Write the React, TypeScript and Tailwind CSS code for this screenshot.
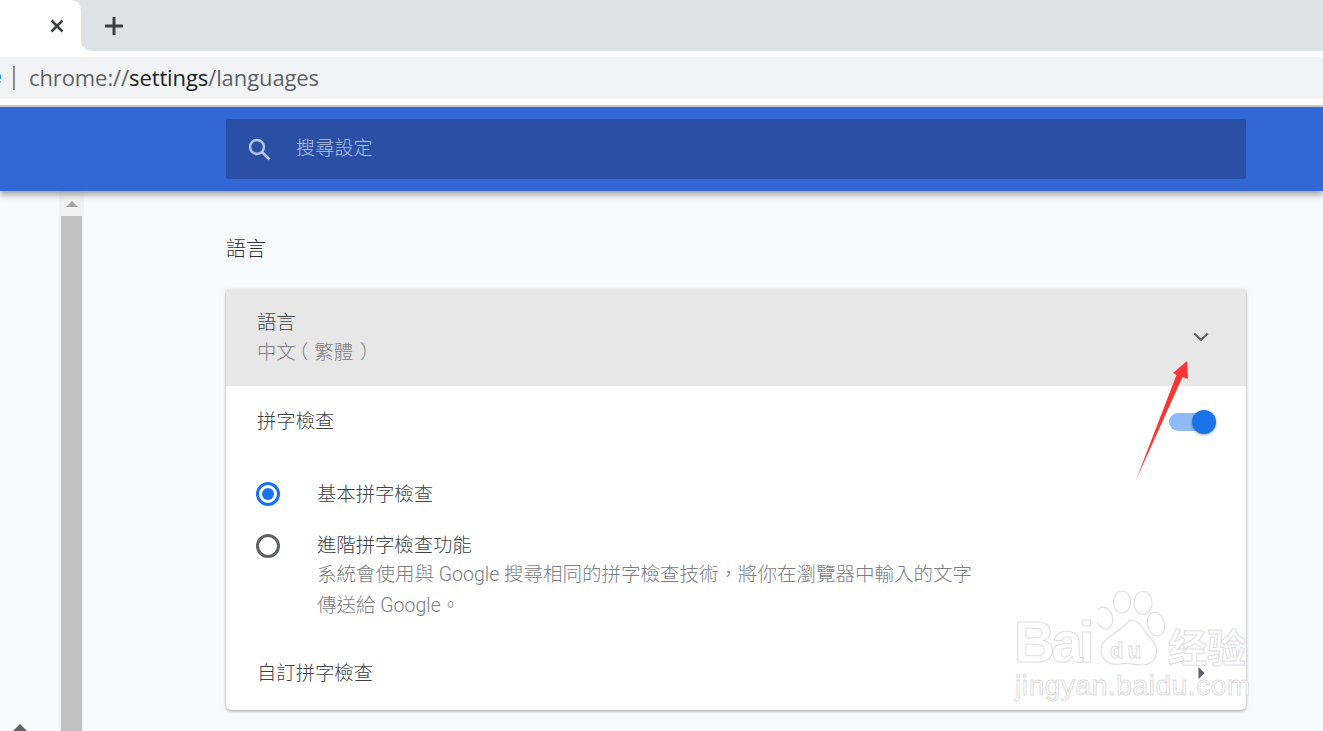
import React from 'react';

const font = "font-['Roboto','Noto_Sans_CJK_TC',sans-serif]";

const TabStrip = () => (
    <div className="h-[51px] bg-[#dee1e6] flex items-start shrink-0">
        <div className="w-[81px] h-[51px] bg-white rounded-tr-[10px] flex items-center justify-end pr-[17px] relative">
            <svg width="14" height="14" viewBox="0 0 14 14">
                <path d="M1.5 1.5 L12.5 12.5 M12.5 1.5 L1.5 12.5" stroke="#3c4043" strokeWidth="2.6" fill="none" />
            </svg>
            <div className="absolute left-[81px] bottom-0 w-[10px] h-[10px] bg-white">
                <div className="w-full h-full bg-[#dee1e6] rounded-bl-[10px]" />
            </div>
        </div>
        <div className="ml-[24px] h-[51px] flex items-center">
            <svg width="18" height="18" viewBox="0 0 18 18">
                <path d="M9 0 V18 M0 9 H18" stroke="#3c4043" strokeWidth="3" fill="none" />
            </svg>
        </div>
    </div>
);

const AddressBar = () => (
    <div className="h-[54px] bg-white py-[6px] shrink-0">
        <div className="h-[42px] bg-[#f1f3f4] flex items-center relative overflow-hidden">
            <span className="absolute left-[-10px] top-[7px] text-[22px] leading-[26px] text-[#1a73e8]">e</span>
            <div className="ml-[13px] w-[2px] h-[24px] bg-[#8a8d91]" />
            <div className="ml-[14px] -mt-[2px] text-[22px] leading-[26px] text-[#5f6368] font-['Open_Sans','Noto_Sans',sans-serif] tracking-[-0.1px]">
                chrome://<span className="text-[#202124]">settings</span>/languages
            </div>
        </div>
    </div>
);

const Header = () => (
    <div className="relative z-10 shrink-0">
        <div className="h-[2px] bg-[#cdcfd2]" />
        <div className="h-[84px] bg-[#3367d6] pl-[226px] pr-[77px] pt-[12px] shadow-[0_4px_6px_rgba(60,64,67,0.45)]">
            <div className="h-[60px] bg-[#2a50a6] rounded-[3px] flex items-center pl-[21px]">
                <svg width="24" height="24" viewBox="0 0 24 24">
                    <circle cx="10" cy="10" r="7" stroke="#b6c6e6" strokeWidth="2.4" fill="none" />
                    <path d="M15 15 L22.5 22.5" stroke="#b6c6e6" strokeWidth="2.6" fill="none" />
                </svg>
                <span className="ml-[25px] text-[19px] font-light text-[#b4c3e3] tracking-[0.2px]">搜尋設定</span>
            </div>
        </div>
    </div>
);

const Watermark = () => (
    <div className="absolute left-[1012px] top-[588px] w-[245px] h-[120px] pointer-events-none">
        <svg width="70" height="82" viewBox="0 0 70 82" className="absolute left-[86px] top-0">
            <g fill="none" stroke="#e0e0e0" strokeWidth="1.2">
                <ellipse cx="24" cy="14" rx="8.5" ry="11" />
                <ellipse cx="45" cy="15" rx="9" ry="11.5" />
                <ellipse cx="6.5" cy="30" rx="8" ry="11" transform="rotate(-15 6.5 30)" />
                <ellipse cx="58" cy="36" rx="8.5" ry="12" transform="rotate(-15 58 36)" />
                <path d="M32 32 C43 32 46 44 54 52 C63 62 58 77 44 77 C36 77 30 74 22 76 C9 78 0 69 4 57 C7 48 21 45 32 32 Z" />
            </g>
        </svg>
        <div className="absolute left-[2px] top-[24px] text-[57px] leading-[60px] font-bold text-white font-['Liberation_Sans',sans-serif] [-webkit-text-stroke:1px_#dedede] tracking-[-4px]">
            Bai
        </div>
        <div className="absolute left-[98px] top-[50px] text-[22px] leading-[26px] font-bold text-white font-['Liberation_Sans',sans-serif] [-webkit-text-stroke:1px_#dedede] tracking-[4px]">
            du
        </div>
        <div className="absolute left-[156px] top-[30px] whitespace-nowrap text-[39px] leading-[54px] font-bold text-white font-['Noto_Sans_CJK_SC',sans-serif] [-webkit-text-stroke:1px_#dedede]">
            经验
        </div>
        <div className="absolute left-[3px] top-[81px] text-[28px] leading-[34px] text-white font-['Liberation_Sans',sans-serif] [-webkit-text-stroke:1px_#dedede] tracking-[0.6px] whitespace-nowrap">
            jingyan.baidu.com
        </div>
    </div>
);

const Arrow = () => (
    <svg width="60" height="128" viewBox="0 0 60 128" className="absolute left-[1130px] top-[355px] pointer-events-none">
        <path d="M57 6 L43 18 L46.5 20 L6 125 L52.5 22 L58 24 Z" fill="#fb3535" />
    </svg>
);

const Toggle = () => (
    <div className="relative w-[47px] h-[24px] flex items-center">
        <div className="w-[34px] h-[18px] rounded-full bg-[#8fbaf5] absolute left-0" />
        <div className="w-[24px] h-[24px] rounded-full bg-[#1a73e8] absolute right-0 shadow-[0_1px_3px_rgba(0,0,0,0.35)]" />
    </div>
);

const Card = () => (
    <div className="w-[1020px] mt-[24px] bg-white rounded-[5px] overflow-hidden shadow-[0_1px_3px_rgba(60,64,67,0.5)] font-light">
        <div className="h-[97px] bg-[#e7e7e7] pl-[31px] pr-[37px] flex items-center justify-between">
            <div>
                <div className="text-[19.33px] leading-[30px] text-[#3c4043]">語言</div>
                <div className="text-[19.33px] leading-[30px] text-[#7b7e82]">
                    中文<span className="ml-[3px] mr-[6px] [font-feature-settings:'halt']">（</span>繁體<span className="ml-[7px] [font-feature-settings:'halt']">）</span>
                </div>
            </div>
            <svg width="16" height="10" viewBox="0 0 16 10" className="mb-[1px]">
                <path d="M1.2 1.5 L8 8 L14.8 1.5" stroke="#5f6368" strokeWidth="2.2" fill="none" />
            </svg>
        </div>
        <div className="h-[90px] pl-[31px] pr-[30px] flex justify-between items-start pt-[21px]">
            <div className="text-[19.33px] leading-[30px] text-[#3c4043]">拼字檢查</div>
            <div className="pt-[3px]"><Toggle /></div>
        </div>
        <div className="pl-[30px] h-[36px] flex items-center">
            <div className="w-[24px] h-[24px] rounded-full border-[3px] border-[#1a73e8] flex items-center justify-center">
                <div className="w-[12px] h-[12px] rounded-full bg-[#1a73e8]" />
            </div>
            <div className="ml-[37px] mt-[2px] text-[19.33px] text-[#3c4043]">基本拼字檢查</div>
        </div>
        <div className="pl-[30px] mt-[19px] flex items-start">
            <div className="w-[24px] h-[24px] mt-[3px] rounded-full border-[3px] border-[#5f6368]" />
            <div className="ml-[37px]">
                <div className="text-[19.33px] leading-[30px] text-[#3c4043]">進階拼字檢查功能</div>
                <div className="-mt-[2px] text-[19.5px] leading-[31px] text-[#7b7e82] w-[670px]">
                    系統會使用與 Google 搜尋相同的拼字檢查技術，將你在瀏覽器中輸入的文字
                    <br />
                    傳送給 Google。
                </div>
            </div>
        </div>
        <div className="h-[74px] mt-[15px] pl-[31px] pr-[41px] flex items-center justify-between">
            <div className="mt-[3px] text-[19.33px] text-[#3c4043]">自訂拼字檢查</div>
            <svg width="7" height="12" viewBox="0 0 7 12">
                <path d="M0.5 0 L6.5 6 L0.5 12 Z" fill="#5f6368" />
            </svg>
        </div>
    </div>
);

const Scrollbar = () => (
    <div className="absolute left-[59px] top-0 bottom-0 w-[25px] bg-[#f1f1f1]">
        <div className="h-[25px] flex justify-center pt-[10px]">
            <div className="w-0 h-0 border-l-[6px] border-r-[6px] border-b-[6px] border-l-transparent border-r-transparent border-b-[#a3a3a3]" />
        </div>
        <div className="mx-[2px] h-[515px] bg-[#c1c1c1]" />
    </div>
);

const App = () => {
    return (
        <div className={`w-[1323px] h-[731px] overflow-hidden bg-[#f8f9fa] flex flex-col relative ${font}`}>
            <TabStrip />
            <AddressBar />
            <Header />
            <main className="flex-1 relative">
                <Scrollbar />
                <div className="absolute left-[13px] bottom-[0px] w-0 h-0 border-l-[7px] border-r-[7px] border-b-[7px] border-l-transparent border-r-transparent border-b-[#5f6368]" />
                <div className="pl-[226px] pt-[43px]">
                    <h2 className="-mt-[1px] text-[20px] leading-[32px] text-[#303134] font-light">語言</h2>
                    <Card />
                </div>
            </main>
            <Watermark />
            <Arrow />
        </div>
    );
};

export default App;
